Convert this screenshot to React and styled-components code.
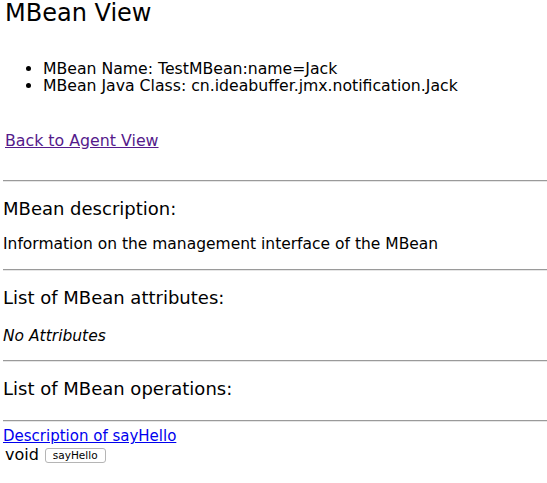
import styled, { createGlobalStyle } from "styled-components";

const GlobalStyle = createGlobalStyle`
  html, body {
    margin: 0;
    padding: 0;
    background: #fff;
  }
  body {
    font-family: "DejaVu Sans", "Liberation Sans", sans-serif;
    color: #000;
  }
`;

const Page = styled.div`
  padding: 0 0 0 3px;
`;

const Title = styled.h2`
  margin: 0;
  padding-left: 2px;
  font-size: 24px;
  font-weight: normal;
  line-height: 26px;
`;

const InfoList = styled.ul`
  margin: 34px 0 0 0;
  padding-left: 40px;
  font-size: 15.7px;
  line-height: 17px;
`;

const BackLink = styled.a`
  display: inline-block;
  margin: 37px 0 0 2px;
  font-size: 15.8px;
  line-height: 20px;
  color: #551a8b;
`;

const Rule = styled.hr`
  margin: ${(p) => p.$top || 0}px 0 0 0;
  border: none;
  border-top: 1px solid #9a9a9a;
  border-bottom: 1px solid #e6e6e6;
  height: 0;
`;

const SectionTitle = styled.h3`
  margin: 16px 0 0 0;
  font-size: 18px;
  font-weight: normal;
  line-height: 22px;
`;

const Text = styled.p`
  margin: ${(p) => p.$top || 12}px 0 0 0;
  font-size: 15.5px;
  line-height: 20px;
  font-style: ${(p) => (p.$italic ? "italic" : "normal")};
`;

const OpLink = styled.a`
  display: block;
  margin-top: 5px;
  font-size: 15px;
  line-height: 18px;
  color: #0000ee;
`;

const OpRow = styled.div`
  display: flex;
  align-items: center;
  gap: 6px;
  padding-left: 2px;
  font-size: 16px;
  line-height: 20px;
`;

const OpButton = styled.button`
  font-family: "DejaVu Sans", "Liberation Sans", sans-serif;
  font-size: 10.5px;
  height: 15px;
  padding: 0 7px;
  background: #fff;
  border: 1px solid #b5b5b5;
  border-radius: 3px;
  color: #000;
`;

export default function App() {
  return (
    <>
      <GlobalStyle />
      <Page>
        <Title>MBean View</Title>
        <InfoList>
          <li>MBean Name: TestMBean:name=Jack</li>
          <li>MBean Java Class: cn.ideabuffer.jmx.notification.Jack</li>
        </InfoList>
        <BackLink href="#">Back to Agent View</BackLink>
        <Rule $top={29} />
        <SectionTitle>MBean description:</SectionTitle>
        <Text $top={14}>Information on the management interface of the MBean</Text>
        <Rule $top={15} />
        <SectionTitle>List of MBean attributes:</SectionTitle>
        <Text $top={17} $italic>No Attributes</Text>
        <Rule $top={14} />
        <SectionTitle>List of MBean operations:</SectionTitle>
        <Rule $top={20} />
        <OpLink href="#">Description of sayHello</OpLink>
        <OpRow>
          void <OpButton>sayHello</OpButton>
        </OpRow>
      </Page>
    </>
  );
}
